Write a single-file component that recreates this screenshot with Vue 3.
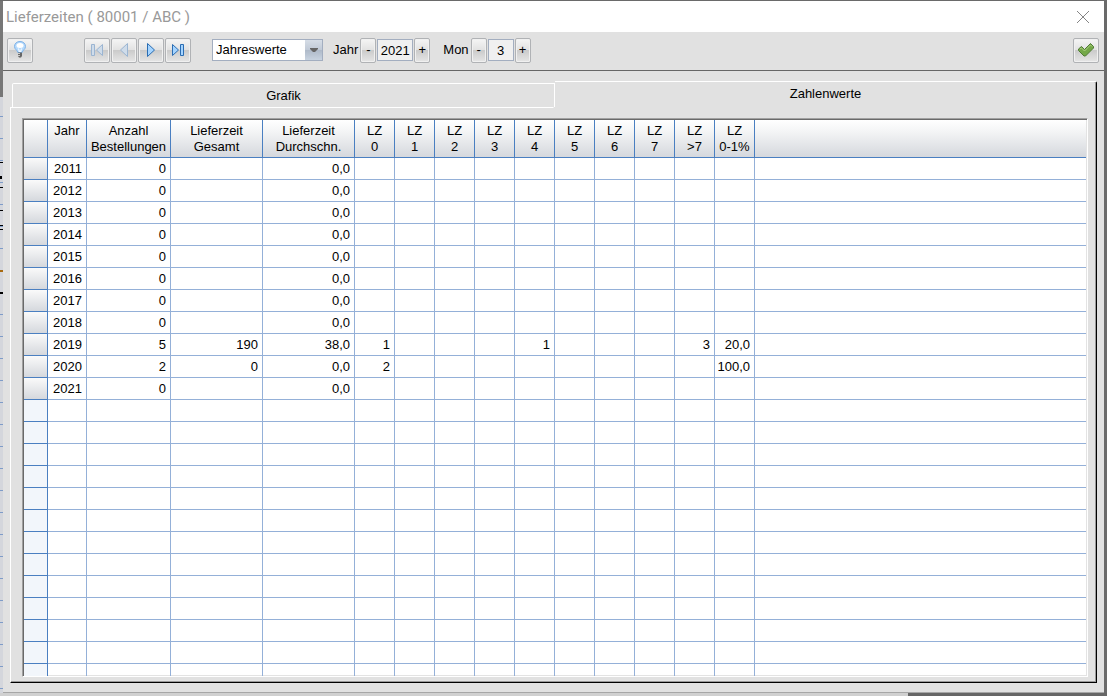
<script setup>
import { ref } from 'vue'

const mode = ref('Jahreswerte')
const year = ref(2021)
const month = ref(3)
const tab = ref('Zahlenwerte')

const headers = [
  ['Jahr', ''],
  ['Anzahl', 'Bestellungen'],
  ['Lieferzeit', 'Gesamt'],
  ['Lieferzeit', 'Durchschn.'],
  ['LZ', '0'],
  ['LZ', '1'],
  ['LZ', '2'],
  ['LZ', '3'],
  ['LZ', '4'],
  ['LZ', '5'],
  ['LZ', '6'],
  ['LZ', '7'],
  ['LZ', '>7'],
  ['LZ', '0-1%'],
]

const plain = (y) => [y, '0', '', '0,0', '', '', '', '', '', '', '', '', '', '']
const rows = [
  plain('2011'),
  plain('2012'),
  plain('2013'),
  plain('2014'),
  plain('2015'),
  plain('2016'),
  plain('2017'),
  plain('2018'),
  ['2019', '5', '190', '38,0', '1', '', '', '', '1', '', '', '', '3', '20,0'],
  ['2020', '2', '0', '0,0', '2', '', '', '', '', '', '', '', '', '100,0'],
  plain('2021'),
]
const emptyRows = 13
</script>

<template>
  <div class="desktop">
    <div class="window">
      <header class="titlebar">
        <h1>Lieferzeiten ( 80001 / ABC )</h1>
        <button class="close" type="button" aria-label="Schließen">
          <svg width="14" height="14" viewBox="0 0 14 14"><path d="M1 1L13 13M13 1L1 13" stroke="#858585" fill="none" /></svg>
        </button>
      </header>

      <div class="toolbar">
        <button class="tool" type="button" aria-label="Hinweis">
          <svg width="20" height="20" viewBox="0 0 20 20">
            <path d="M10 1.500C6.800 1.500 4.500 3.500 4.500 6.500C4.500 9.500 7.500 10 7.800 12.500H12.200C12.500 10 15.500 9.500 15.500 6.500C15.500 3.500 13.200 1.500 10 1.500Z" fill="#b5dafd" stroke="#7fb2e6" />
            <ellipse cx="10" cy="5.500" rx="3.500" ry="2.500" fill="#fff" />
            <path d="M8.500 8.500L9.500 12M11.500 8.500L10.500 12" stroke="#fff" />
            <path d="M8 12.500H12V16L11 17.500H9L8 16Z" fill="#666" />
            <path d="M8 13.500H10M8 15.500H10" stroke="#ccc" />
          </svg>
        </button>
        <div class="nav">
          <button class="tool" type="button" disabled aria-label="Erster">
            <svg width="16" height="16" viewBox="0 0 16 16"><path d="M2.500 2.500H5.500V13.500H2.500ZM13.500 2.500V13.500L7.500 8Z" fill="#cfdcea" stroke="#9bb5d2" /></svg>
          </button>
          <button class="tool" type="button" disabled aria-label="Zurück">
            <svg width="16" height="16" viewBox="0 0 16 16"><path d="M11.500 1.500V14.500L4.500 8Z" fill="#cfdcea" stroke="#9bb5d2" /></svg>
          </button>
          <button class="tool" type="button" aria-label="Weiter">
            <svg width="16" height="16" viewBox="0 0 16 16"><path d="M4.500 1.500V14.500L11.500 8Z" fill="#a5d4ff" stroke="#2a6db3" /></svg>
          </button>
          <button class="tool" type="button" aria-label="Letzter">
            <svg width="16" height="16" viewBox="0 0 16 16"><path d="M2.500 2.500V13.500L8.500 8ZM10.500 2.500H13.500V13.500H10.500Z" fill="#a5d4ff" stroke="#2a6db3" /></svg>
          </button>
        </div>
        <div class="combo">
          <select v-model="mode" aria-label="Ansicht">
            <option>Jahreswerte</option>
            <option>Monatswerte</option>
          </select>
          <span class="arrow" aria-hidden="true">
            <svg width="8" height="5" viewBox="0 0 8 5"><path d="M0 0H8V1L5 4H3L0 1Z" fill="#666" /></svg>
          </span>
        </div>
        <div class="stepper">
          <label for="year">Jahr</label>
          <button type="button" aria-label="Jahr zurück" @click="year--">-</button>
          <input id="year" v-model="year" class="year" type="text" />
          <button type="button" aria-label="Jahr vor" @click="year++">+</button>
        </div>
        <div class="stepper month">
          <label for="month">Mon</label>
          <button type="button" aria-label="Monat zurück" @click="month--">-</button>
          <input id="month" v-model="month" type="text" />
          <button type="button" aria-label="Monat vor" @click="month++">+</button>
        </div>
        <button class="tool ok" type="button" aria-label="OK">
          <svg width="18" height="16" viewBox="0 0 18 16">
            <path d="M1.500 7L4.500 4.500L7.500 7.500L13.500 1.500L16.500 4.500V6L8.500 14H7L1.500 8.500Z" fill="#74a848" stroke="#4f7a35" stroke-linejoin="round" />
            <path d="M3 7L4.500 6L7.500 9L13.500 3L15 4.500" fill="none" stroke="#acd082" />
          </svg>
        </button>
      </div>

      <main class="body">
        <div class="tabs" role="tablist">
          <button type="button" role="tab" :aria-selected="tab === 'Grafik'" class="tab back">Grafik</button>
          <button type="button" role="tab" :aria-selected="tab === 'Zahlenwerte'" class="tab front">Zahlenwerte</button>
        </div>
        <section class="panel">
          <div class="grid">
            <table>
              <colgroup>
                <col class="c-mark" />
                <col class="c-year" />
                <col class="c-count" />
                <col class="c-time" />
                <col class="c-time" />
                <col v-for="n in 10" :key="n" class="c-lz" />
                <col />
              </colgroup>
              <thead>
                <tr>
                  <th></th>
                  <th v-for="(h, i) in headers" :key="i"><span>{{ h[0] }}</span><span>{{ h[1] }}</span></th>
                  <th></th>
                </tr>
              </thead>
              <tbody>
                <tr v-for="row in rows" :key="row[0]">
                  <td class="mark"></td>
                  <td v-for="(cell, i) in row" :key="i">{{ cell }}</td>
                  <td></td>
                </tr>
                <tr v-for="n in emptyRows" :key="'e' + n">
                  <td class="mark blank"></td>
                  <td v-for="i in 15" :key="i"></td>
                </tr>
              </tbody>
            </table>
          </div>
        </section>
      </main>
    </div>
    <div class="behind" aria-hidden="true"></div>
  </div>
</template>

<style>
body {
  margin: 0;
}
</style>

<style scoped>
* {
  box-sizing: border-box;
}
.desktop {
  height: 100vh;
  display: flex;
  flex-direction: column;
  padding: 1px 3px 0;
  background:
    linear-gradient(#6a6a6a, #6a6a6a) right / 3px 100% no-repeat,
    linear-gradient(#6a6a6a, #6a6a6a) top / 100% 1px no-repeat,
    linear-gradient(#777, #777) left top / 3px 97px no-repeat,
    linear-gradient(#000, #000) left 162px / 3px 1px no-repeat,
    linear-gradient(#000, #000) left 176px / 2px 3px no-repeat,
    linear-gradient(#000, #000) left 187px / 3px 1px no-repeat,
    linear-gradient(#000, #000) left 210px / 3px 1px no-repeat,
    linear-gradient(#000, #000) left 225px / 3px 1px no-repeat,
    linear-gradient(#000, #000) left 229px / 3px 1px no-repeat,
    linear-gradient(#a86a10, #a86a10) left 270px / 3px 2px no-repeat,
    linear-gradient(#000, #000) left 292px / 3px 2px no-repeat,
    repeating-linear-gradient(#d4d6dc 0, #d4d6dc 21px, #7f9cc8 21px, #7f9cc8 22px) left 7px / 3px 100% no-repeat,
    #d0d0d0;
  font: 13px/16px "Liberation Sans", Arial, sans-serif;
  color: #000;
}
.window {
  flex: 1;
  min-height: 0;
  display: flex;
  flex-direction: column;
  background: #e1e1e1;
  border-bottom: 1px solid #a6a6a6;
}
.behind {
  height: 3px;
  margin: 0 -3px;
  background: linear-gradient(90deg, #d0d0d0 82%, #666 82%);
}
button,
input,
select {
  font: inherit;
  color: inherit;
  margin: 0;
  padding: 0;
}
.titlebar {
  height: 31px;
  display: flex;
  align-items: center;
  justify-content: space-between;
  padding: 0 14px 0 3px;
  background: #fff;
}
h1 {
  margin: 0;
  font: 400 15px/20px Roboto, "Open Sans", sans-serif;
  color: #999;
}
.close {
  display: flex;
  border: 0;
  background: none;
}
.toolbar {
  height: 39px;
  display: flex;
  align-items: center;
  padding: 0 5px 2px 4px;
  border-bottom: 1px solid #666;
}
.tool,
.stepper button {
  height: 25px;
  border: 1px solid #b0b2b5;
  border-radius: 2px;
  background: linear-gradient(#f5f5f5 0%, #e2e2e2 48%, #cbcbcb 50%, #e6e6e6 100%);
  box-shadow: inset 0 0 0 1px #f0f0f0;
}
.tool {
  width: 26px;
  display: flex;
  align-items: center;
  justify-content: center;
}
.nav {
  display: flex;
  gap: 1px;
  margin-left: 51px;
}
.combo {
  position: relative;
  width: 111px;
  margin-left: 21px;
}
select {
  display: block;
  width: 100%;
  height: 22px;
  padding: 0 18px 0 3px;
  appearance: none;
  border: 1px solid #a3aec0;
  border-radius: 0;
  background: #fff;
}
.arrow {
  position: absolute;
  top: 1px;
  right: 1px;
  bottom: 1px;
  width: 17px;
  display: flex;
  align-items: center;
  justify-content: center;
  pointer-events: none;
  background: linear-gradient(#d6dde6, #c0c9d6 50%, #aeb9c8 50%, #c8d3e0);
}
.stepper {
  display: flex;
  align-items: center;
  gap: 1px;
  margin-left: 10px;
}
.stepper.month {
  margin-left: 13px;
}
label {
  margin-right: 1px;
}
.stepper button {
  width: 16px;
}
input {
  width: 26px;
  height: 22px;
  text-align: center;
  border: 1px solid #a3aec0;
  background: #f0f0f0;
}
input.year {
  width: 36px;
}
.ok {
  margin-left: auto;
}
.body {
  flex: 1;
  min-height: 0;
  display: flex;
  flex-direction: column;
  padding: 10px 7px 9px;
}
.tabs {
  display: flex;
  align-items: flex-end;
  height: 26px;
}
.tab {
  flex: 1;
  background: none;
  border: 1px solid #fff;
}
.back {
  height: 24px;
  margin-left: 2px;
  border-bottom: 0;
  border-top-left-radius: 2px;
}
.front {
  height: 26px;
  padding-bottom: 2px;
  border-width: 1px 0 0;
  border-right: 1px solid #000;
  border-top-right-radius: 2px;
  box-shadow: inset -1px 0 #999;
}
.panel {
  flex: 1;
  min-height: 0;
  display: flex;
  padding: 11px 8px 5px 11px;
  border: solid;
  border-width: 0 1px 1px;
  border-color: #fff #000 #000 #fff;
  box-shadow: inset -1px -1px #999;
  background: linear-gradient(#fff, #fff) left top / 50% 1px no-repeat;
}
.grid {
  flex: 1;
  min-width: 0;
  overflow: hidden;
  border: 1px solid;
  border-color: #a0a0a0 #fff #fff #a0a0a0;
  background: #fff;
  box-shadow: inset 1px 1px #696969, inset -1px -1px #e3e3e3;
  padding: 1px;
}
table {
  width: 100%;
  table-layout: fixed;
  border-collapse: separate;
  border-spacing: 0;
}
.c-mark { width: 24px; }
.c-year { width: 39px; }
.c-count { width: 84px; }
.c-time { width: 92px; }
.c-lz { width: 40px; }
th {
  height: 38px;
  padding: 3px 0 0;
  vertical-align: top;
  font-weight: 400;
  border-right: 1px solid #4a7fc1;
  border-bottom: 1px solid #4a7fc1;
  background: linear-gradient(#fff, #f4f5f6 30%, #d5d8dd);
}
th span {
  display: block;
}
td {
  height: 22px;
  padding: 0 4px 0 0;
  text-align: right;
  border-right: 1px solid #94b0d8;
  border-bottom: 1px solid #94b0d8;
}
th:last-child,
td:last-child {
  border-right: 0;
}
.mark {
  border-color: #4a7fc1;
  background: linear-gradient(#fafafa, #d5d8dd);
}
.blank {
  background: #f2f6fb;
}
</style>
